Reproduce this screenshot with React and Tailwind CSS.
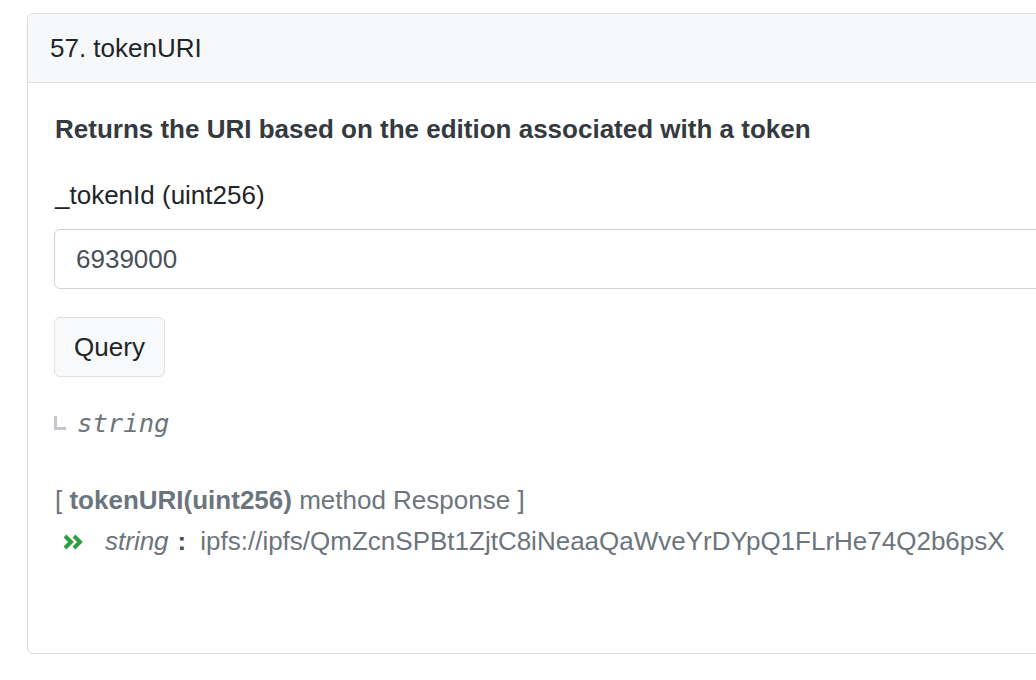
import React from "react";

const sans = { fontFamily: '"Liberation Sans", Arial, sans-serif' };

const App = () => {
  return (
    <div className="w-[1036px] h-[680px] overflow-hidden bg-white" style={sans}>
      <div className="ml-[27px] mt-[13px] w-[1100px] h-[641px] border border-[#dcdcdc] rounded-[6px] flex flex-col">
        <div className="h-[69px] bg-[#f7f8f9] border-b border-[#dcdcdc] rounded-t-[6px] flex items-center pl-[22px] text-[26px] text-[#212529]">
          57. tokenURI
        </div>
        <div className="flex flex-col pl-[26px] pt-[31px]">
          <div className="ml-[1px] h-[31px] leading-[31px] text-[26px] font-bold text-[#343a40]">
            Returns the URI based on the edition associated with a token
          </div>
          <div className="ml-[1px] mt-[35px] h-[31px] leading-[31px] text-[26px] text-[#212529]">
            _tokenId (uint256)
          </div>
          <div className="mt-[18px] h-[60px] w-[1020px] border border-[#ced4da] rounded-[6px] flex items-center pl-[21px] text-[26px] text-[#495057]">
            6939000
          </div>
          <button className="mt-[28px] h-[60px] w-[111px] bg-[#f8f9fa] border border-[#dee2e6] rounded-[6px] text-[26px] text-[#212529]">
            Query
          </button>
          <div className="mt-[31px] h-[31px] flex items-center gap-[11px]">
            <div className="w-[12px] h-[14px] border-l-[3px] border-b-[3px] border-[#c3c7cc] mt-[-2px]" />
            <span
              className="italic text-[25.6px] text-[#6c757d]"
              style={{ fontFamily: '"DejaVu Sans Mono", monospace' }}
            >
              string
            </span>
          </div>
          <div className="ml-[1px] mt-[46px] h-[31px] leading-[31px] text-[26px] text-[#6c757d]">
            [ <span className="font-bold">tokenURI(uint256)</span> method Response ]
          </div>
          <div className="mt-[10px] h-[31px] flex items-center text-[26px] text-[#6c757d]">
            <svg width="20" height="16" viewBox="0 0 20 16" className="ml-[9px] mr-[22px]">
              <polyline points="2,2 8,8 2,14" fill="none" stroke="#2e9e3f" strokeWidth="4" />
              <polyline points="11,2 17,8 11,14" fill="none" stroke="#2e9e3f" strokeWidth="4" />
            </svg>
            <span className="italic">string</span>
            <span className="font-bold text-[#495057] ml-[9px] mr-[14px]">:</span>
            <span>ipfs://ipfs/QmZcnSPBt1ZjtC8iNeaaQaWveYrDYpQ1FLrHe74Q2b6psX</span>
          </div>
        </div>
      </div>
    </div>
  );
};

export default App;
